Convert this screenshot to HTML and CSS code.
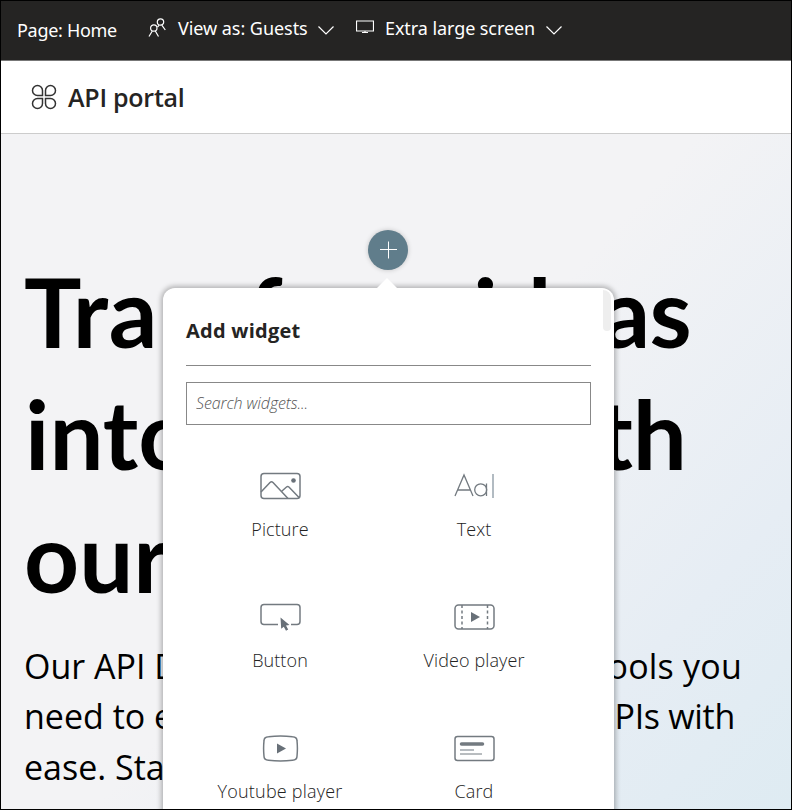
FILE: index.html
```html
<!DOCTYPE html>
<html lang="en">
<head>
<meta charset="utf-8">
<title>API portal</title>
<link rel="stylesheet" href="styles.css">
</head>
<body>
<div class="frame">
  <nav class="toolbar">
    <span class="page-name">Page: Home</span>
    <svg class="people" width="18" height="20" viewBox="0 0 18 20"><circle cx="12.5" cy="4" r="3.2"/><circle cx="5.8" cy="10" r="3.2"/><path d="M1 18.500 4.300 13M7.300 13l3.200 5.500M11.200 7.200 9.500 9M13.800 7.200 17.300 12"/></svg>
    <span class="view-as">View as: Guests</span>
    <svg class="chevron" width="16" height="9" viewBox="0 0 16 9"><path d="M.5.500 8 8 15.500.500"/></svg>
    <svg class="monitor" width="18" height="14" viewBox="0 0 18 14"><path d="M.5 1h17v10H.500zM9 11v2M6 12.500h6"/></svg>
    <span class="screen">Extra large screen</span>
    <svg class="chevron" width="16" height="9" viewBox="0 0 16 9"><path d="M.5.500 8 8 15.500.500"/></svg>
  </nav>
  <header class="header">
    <svg class="logo" width="26" height="26" viewBox="0 0 26 26"><path d="M11.500 11.500H6.500a5 5 0 1 1 5-5zM14.500 11.500V6.500a5 5 0 1 1 5 5zM11.500 14.500V19.500a5 5 0 1 1-5-5zM14.500 14.500H19.500a5 5 0 1 1-5 5z"/></svg>
    <span class="brand">API portal</span>
  </header>
  <main class="hero">
    <h1 class="title"><span class="t1"><span class="tra">Tra</span><span class="n">n</span>sform ideas</span><span class="row"><span>into</span><span>with</span></span><span>our</span></h1>
    <div class="lead">
      <div class="row r1"><span>Our API D</span><span>tools you</span></div>
      <div class="row r2"><span>need to e</span><span><b>A</b>PIs with</span></div>
      <div class="row"><span>ease. Sta</span></div>
    </div>
    <button class="add" aria-label="Add"><svg width="18" height="18" viewBox="0 0 18 18"><path d="M9.500.500v17M1 8.500h17"/></svg></button>
    <section class="popover">
      <i class="arrow"></i><i class="thumb"></i>
      <h2 class="heading">Add widget</h2>
      <input class="search" placeholder="Search widgets...">
      <div class="widgets">
        <div class="widget"><svg width="42" height="28" viewBox="0 0 42 28"><rect x="1.500" y="1.500" width="39" height="25" rx="3"/><path d="m1.500 20 9-9.500q1.500-1.500 3 0l15 16M22.500 19l4.500-4q1.200-1 2.400 0l10.600 11"/><circle class="fill" cx="34" cy="8.500" r="2.300"/></svg><span>Picture</span></div>
        <div class="widget"><svg width="42" height="28" viewBox="0 0 42 28"><path class="thin" d="M1.500 24 10.500 3l9 21M4.500 18h12M33 11.500v12.500"/><circle class="thin" cx="27.200" cy="17.800" r="6"/><path class="pale" d="M39.500 2v24"/></svg><span>Text</span></div>
        <div class="widget"><svg width="42" height="28" viewBox="0 0 42 28"><path d="M18.500 21.500H4.500q-3 0-3-3v-14q0-3 3-3h33q3 0 3 3v14q0 3-3 3h-6"/><path class="fill" d="M21 14.500 30 22l-3.500.5 2.200 4-2.200 1.200-2.200-4-2.600 2z"/></svg><span>Button</span></div>
        <div class="widget"><svg width="42" height="28" viewBox="0 0 42 28"><rect x="1.500" y="2" width="39" height="24" rx="3.500"/><path d="M8.500 2v24M34 2v24" stroke-dasharray="3 2.500"/><path class="fill" d="m17.500 9 9 5-9 5z"/></svg><span>Video player</span></div>
        <div class="widget"><svg width="42" height="28" viewBox="0 0 42 28"><path d="M9 2.700q12-1.200 24 0 4.500.3 4.500 4 .8 7.800 0 15.600 0 3.700-4.500 4-12 1.200-24 0-4.500-.3-4.500-4-.8-7.800 0-15.600 0-3.700 4.500-4z"/><path class="fill" d="m17.500 9.500 9 5-9 5z"/></svg><span class="wide">Youtube player</span></div>
        <div class="widget"><svg width="42" height="28" viewBox="0 0 42 28"><rect x="1.500" y="2.500" width="39" height="24" rx="2.500"/><path class="bar" d="M8 10h21"/><path class="pale2" d="M6.500 16h14"/><path d="M6.500 20h22" stroke-width="1"/></svg><span>Card</span></div>
      </div>
    </section>
  </main>
</div>
</body>
</html>
```
FILE: styles.css
```css
* { box-sizing: border-box; }
body { margin: 0; }
.frame { width: 792px; height: 810px; border: 1px solid #000; overflow: hidden; background: #fff; font-family: "Open Sans", sans-serif; display: flex; flex-direction: column; }
svg { fill: none; flex: none; }
.toolbar { height: 60px; flex: none; background: #252423; border-bottom: 1px solid #777; color: #fff; display: flex; align-items: center; padding: 0 0 6px 16px; font: 18px/24px "Noto Sans", sans-serif; white-space: nowrap; }
.toolbar svg { stroke: #fff; stroke-width: 1.2; }
.page-name { width: 100px; margin: 4px 31px 0 0; letter-spacing: -.3px; }
.view-as { width: 130px; margin-left: 12px; letter-spacing: -.05px; }
.chevron { margin: 5px 0 0 10px; }
.monitor { margin: -2px 11px 0 22px; }
.screen { width: 151px; letter-spacing: -.08px; }
.header { height: 73px; flex: none; border-bottom: 1px solid #ccc; display: flex; align-items: center; padding-left: 30px; }
.logo { stroke: #333; stroke-width: 1.5; margin-top: -1px; }
.brand { margin: -1px 0 0 11px; font: 600 25px/34px "Open Sans", sans-serif; color: #252423; letter-spacing: -.25px; white-space: nowrap; }
.hero { position: relative; flex: 1; background: linear-gradient(132deg, #f3f3f5 0%, #f3f3f5 50%, #e6edf4 80%, #deebf2 100%); padding: 116px 0 0 23px; color: #000; overflow: hidden; }
.title { margin: 0; font: 700 96px/122.300px Lato, sans-serif; display: flex; flex-direction: column; white-space: nowrap; }
.t1 { letter-spacing: -.6px; }
.tra { letter-spacing: .8px; }
.t1 .n { margin: 0 -8px 0 3px; }
.row { display: flex; justify-content: space-between; width: 663px; }
.title .row { padding-left: 1px; }
.lead { margin-top: 24px; font: 34px/50.500px "Open Sans", sans-serif; white-space: nowrap; }
.lead .row span + span { letter-spacing: .2px; }
.lead .r1 { width: 718px; }
.lead .r2 { width: 711px; }
.lead .r2 span + span { letter-spacing: -.3px; }
.lead b { font-weight: 400; margin-right: 3px; }
.add { position: absolute; left: 367px; top: 96px; width: 40px; height: 40px; padding: 0; border: 0; border-radius: 50%; background: #607d8b; box-shadow: 0 0 5px #0003; display: flex; align-items: center; justify-content: center; }
.add svg { stroke: #fff; stroke-width: 1; }
.popover { position: absolute; left: 162px; top: 154px; width: 451px; height: 540px; padding: 0 23px; background: #fff; border-radius: 12px 12px 0 0; box-shadow: 0 0 5px 2px #0004; }
.arrow { position: absolute; left: 214px; top: -10px; width: 20px; height: 10px; background: #fff; clip-path: polygon(50% 0, 100% 100%, 0 100%); }
.thumb { position: absolute; right: 3px; top: 2px; width: 8px; height: 41px; background: #eee; border-radius: 0 8px 4px 4px; }
.heading { margin: 0 0 16px; height: 78px; padding-top: 28px; border-bottom: 1px solid #888; font: 700 20px/30px "Open Sans", sans-serif; letter-spacing: .25px; color: #252423; }
.search { display: block; width: 405px; height: 43px; border: 1px solid #888; border-radius: 0; padding: 0 9px 2px; background: #fff; font: italic 300 16px "Open Sans", sans-serif; letter-spacing: -.1px; }
.search::placeholder { color: #555; opacity: 1; }
.widgets { display: grid; grid-template-columns: 194px 194px; grid-auto-rows: 131px; margin: 47px 0 0 -3px; }
.widget { display: flex; flex-direction: column; align-items: center; gap: 17px; font: 300 18px/25px "Open Sans", sans-serif; color: #222; white-space: nowrap; letter-spacing: .1px; }
.widget .wide { letter-spacing: .2px; }
.widget svg { stroke: #737a80; stroke-width: 1.5; transform: translateX(.5px); }
.widget .fill { fill: #687078; stroke: none; }
.widget .thin { stroke-width: 1.3; }
.widget .pale { stroke: #98a5ae; }
.widget .pale2 { stroke: #b6bbc0; stroke-width: 2; }
.widget .bar { stroke-width: 3.500; stroke-linecap: round; }
```
